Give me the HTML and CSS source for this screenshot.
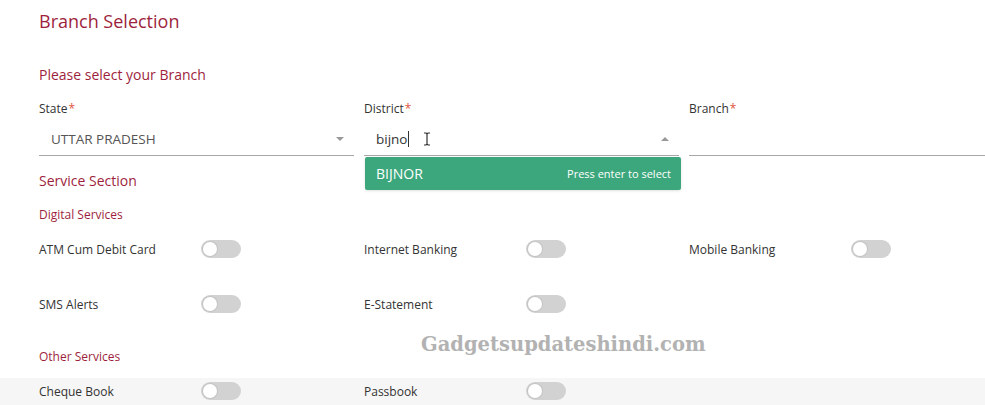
FILE: index.html
```html
<!DOCTYPE html>
<html lang="en">
<head>
<meta charset="utf-8">
<title>Branch Selection</title>
<link rel="stylesheet" href="styles.css">
</head>
<body>
<main class="page">
  <h1 class="title">Branch Selection</h1>
  <h2 class="subtitle">Please select your Branch</h2>
  <div class="fields">
    <div class="field">
      <div class="label">State<span class="req">*</span></div>
      <div class="input">
        <span class="value">UTTAR PRADESH</span>
        <span class="caret down"></span>
      </div>
    </div>
    <div class="field">
      <div class="label">District<span class="req">*</span></div>
      <div class="input">
        <span class="value typed">bijno<span class="text-cursor"></span></span>
        <svg class="ibeam" width="8" height="14" viewBox="0 0 8 14"><path d="M1 1h2l1 1 1-1h2M4 2v10M1 13h2l1-1 1 1h2" fill="none" stroke="#333" stroke-width="1.2"/></svg>
        <span class="caret up"></span>
      </div>
      <div class="suggest">
        <span class="suggest-name">BIJNOR</span>
        <span class="suggest-hint">Press enter to select</span>
      </div>
    </div>
    <div class="field">
      <div class="label">Branch<span class="req">*</span></div>
      <div class="input"></div>
    </div>
  </div>

  <h2 class="section">Service Section</h2>
  <h3 class="group">Digital Services</h3>
  <div class="services">
    <div class="service"><span class="service-name">ATM Cum Debit Card</span><span class="toggle"></span></div>
    <div class="service"><span class="service-name">Internet Banking</span><span class="toggle"></span></div>
    <div class="service"><span class="service-name">Mobile Banking</span><span class="toggle"></span></div>
    <div class="service"><span class="service-name">SMS Alerts</span><span class="toggle"></span></div>
    <div class="service"><span class="service-name">E-Statement</span><span class="toggle"></span></div>
  </div>
  <h3 class="group other">Other Services</h3>
  <div class="services">
    <div class="service"><span class="service-name">Cheque Book</span><span class="toggle"></span></div>
    <div class="service"><span class="service-name">Passbook</span><span class="toggle"></span></div>
  </div>

  <div class="watermark">Gadgetsupdateshindi.com</div>
</main>
</body>
</html>
```
FILE: styles.css
```css
html, body {
  margin: 0;
  padding: 0;
  height: 100%;
}
body {
  font-family: "Open Sans", "Noto Sans", sans-serif;
  color: #333;
  background: linear-gradient(to bottom, #ffffff 0, #ffffff 378px, #f6f6f6 378px);
  overflow: hidden;
}
.page {
  position: relative;
  padding: 8px 0 0 39px;
}
.title {
  margin: 0;
  font-size: 18px;
  line-height: 26px;
  font-weight: 400;
  color: #9e1f3d;
}
.subtitle {
  margin: 31px 0 0;
  font-size: 14px;
  line-height: 20px;
  font-weight: 400;
  color: #9e1f3d;
}
.fields {
  display: grid;
  grid-template-columns: 315px 315px 1fr;
  column-gap: 10px;
  margin-top: 15px;
}
.field {
  position: relative;
}
.label {
  font-size: 12px;
  line-height: 18px;
}
.req {
  color: #e0533d;
  margin-left: 1px;
}
.input {
  position: relative;
  display: flex;
  align-items: center;
  height: 34px;
  padding: 0 0 0 12px;
  border-bottom: 1px solid #a8a8a8;
  box-sizing: border-box;
  margin-top: 4px;
}
.value {
  font-size: 13.5px;
  color: #555;
}
.typed {
  color: #333;
  display: flex;
  align-items: center;
}
.text-cursor {
  display: inline-block;
  width: 1px;
  height: 16px;
  background: #333;
  margin-left: 1px;
}
.ibeam {
  margin-left: 14px;
}
.caret {
  position: absolute;
  right: 10px;
  top: 15px;
  width: 0;
  height: 0;
  border-left: 4px solid transparent;
  border-right: 4px solid transparent;
}
.caret.down {
  border-top: 4px solid #999;
}
.caret.up {
  border-bottom: 4px solid #999;
  right: 10px;
}
.suggest {
  position: absolute;
  left: 1px;
  top: 57px;
  width: 316px;
  height: 33px;
  box-sizing: border-box;
  padding: 0 10px 0 11px;
  display: flex;
  align-items: center;
  justify-content: space-between;
  background: #3ca77c;
  color: #fff;
  border-radius: 2px;
  box-shadow: 0 1px 3px rgba(0,0,0,0.12);
}
.suggest-name {
  font-size: 14px;
}
.suggest-hint {
  font-size: 11px;
}
.section {
  margin: 15px 0 0;
  font-size: 14px;
  line-height: 20px;
  font-weight: 400;
  color: #9e1f3d;
}
.group {
  margin: 15px 0 0;
  font-size: 12px;
  line-height: 18px;
  font-weight: 400;
  color: #9e1f3d;
}
.services {
  display: grid;
  grid-template-columns: 315px 315px 1fr;
  column-gap: 10px;
  row-gap: 19px;
  grid-auto-rows: 36px;
  margin-top: 7px;
}
.service {
  display: flex;
  align-items: center;
}
.service-name {
  width: 162px;
  font-size: 12px;
}
.toggle {
  position: relative;
  width: 40px;
  height: 18px;
  border-radius: 9px;
  background: #d2d2d2;
}
.toggle::after {
  content: "";
  position: absolute;
  left: 2px;
  top: 2px;
  width: 14px;
  height: 14px;
  border-radius: 50%;
  background: #fff;
  box-shadow: 0 0 0 1px #c4c4c4;
}
.group.other {
  margin-top: 26px;
}
.watermark {
  position: absolute;
  left: 421px;
  top: 333px;
  font-family: "DejaVu Serif", "Liberation Serif", serif;
  font-weight: 700;
  font-size: 19.5px;
  color: #b2b2b2;
}
```
